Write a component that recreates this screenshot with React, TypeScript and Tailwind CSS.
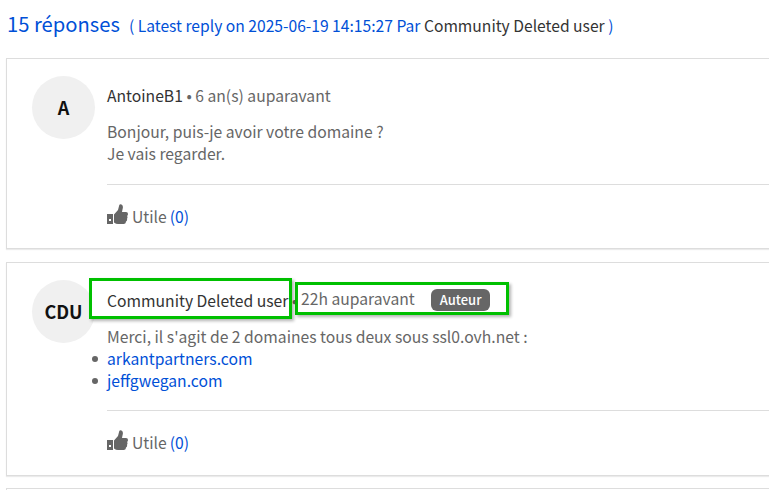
const font = "font-['Noto_Sans_CJK_JP','Liberation_Sans',sans-serif]";

function ThumbIcon() {
  return (
    <svg viewBox="0 0 21 20" className="mr-[4px] h-[20px] w-[21px] shrink-0 -translate-y-[3px] fill-[#666666]">
      <path d="M0 10h6v10H0z M2 15v2h2v-2z" fillRule="evenodd" />
      <path d="M7 10.5 11 6l1.3-5Q12.8-.2 14.500.5 16.600 1.600 15.600 5L15 8h4q2 0 2 2 0 1.500-1 2 1 1 0 3 .5 1.500-1 2.500 0 2-2 2.500h-6q-2 0-4-1.500z" />
    </svg>
  );
}

function Helpful() {
  return (
    <div className="flex h-[22px] items-center text-[15.7px] leading-[22px] text-[#666666]">
      <ThumbIcon />
      <span>Utile</span>
      <span className="ml-[3px] text-[#0050d7]">(0)</span>
    </div>
  );
}

function LinkItem({ label }: { label: string }) {
  return (
    <li className="-ml-[15px] flex items-center">
      <span className="mr-[9px] h-[6px] w-[6px] rounded-full bg-[#666666]" />
      <span className="text-[#0050d7]">{label}</span>
    </li>
  );
}

export default function App() {
  return (
    <div className={`${font} h-[490px] w-[769px] overflow-hidden bg-white`}>
      <div className="flex h-[58px] items-start pl-[7px] pt-[10px]">
        <span className="text-[20.2px] leading-[28px] text-[#0050d7]">15 réponses</span>
        <span className="ml-[9px] mt-[4px] text-[15.65px] leading-[24px] text-[#0050d7]">
          ( Latest reply on 2025-06-19 14:15:27 Par <span className="text-[#333333]">Community Deleted user</span> )
        </span>
      </div>

      <div className="ml-[6px] flex h-[191px] w-[800px] border border-r-0 border-[#dddddd] pl-[25px] pt-[17px] shadow-[0_1px_1px_rgba(0,0,0,0.08)]">
        <div className="flex h-[63px] w-[63px] shrink-0 items-center justify-center rounded-full bg-[#f0f0f0] text-[18px] font-bold text-[#111111]">
          A
        </div>
        <div className="ml-[12px] flex-1">
          <div className="mt-[8px] text-[15.7px] leading-[24px] text-[#666666]">
            <span className="text-[#333333]">AntoineB1</span> • 6 an(s) auparavant
          </div>
          <div className="mt-[13px] text-[15.7px] leading-[22px] text-[#666666]">
            Bonjour, puis-je avoir votre domaine ?
            <br />
            Je vais regarder.
          </div>
          <div className="mb-[21px] mt-[19px] h-px bg-[#dddddd]" />
          <Helpful />
        </div>
      </div>

      <div className="ml-[6px] mt-[13px] flex h-[214px] w-[800px] border border-r-0 border-[#dddddd] pl-[25px] pt-[17px] shadow-[0_1px_1px_rgba(0,0,0,0.08)]">
        <div className="flex h-[63px] w-[63px] shrink-0 items-center justify-center rounded-full bg-[#f0f0f0] text-[18px] font-bold text-[#111111]">
          CDU
        </div>
        <div className="ml-[12px] flex-1">
          <div className="flex h-[40px] items-start whitespace-nowrap text-[15.7px] text-[#666666]">
            <span className="relative z-10 -ml-[18px] -mt-[2px] flex h-[41px] w-[203px] items-center border-[3px] border-[#00c000] bg-white pl-[15px] pt-[5px] text-[#333333] shadow-[2px_2px_3px_rgba(0,0,0,0.3)]">
              Community Deleted user
            </span>
            <span className="mt-[9px] w-[3px] text-center">•</span>
            <span className="mt-[2px] flex h-[33px] w-[214px] items-center border-[3px] border-[#00c000] bg-white pl-[3px] shadow-[2px_2px_3px_rgba(0,0,0,0.3)]">
              <span>22h auparavant</span>
              <span className="ml-[16px] mt-[3px] rounded-[6px] bg-[#666666] px-[9px] text-[13px] font-medium leading-[22px] text-white">
                Auteur
              </span>
            </span>
          </div>
          <div className="mt-[6px] text-[15.7px] leading-[22px] text-[#666666]">
            Merci, il s'agit de 2 domaines tous deux sous ssl0.ovh.net :
          </div>
          <ul className="text-[15.7px] leading-[22px]">
            <LinkItem label="arkantpartners.com" />
            <LinkItem label="jeffgwegan.com" />
          </ul>
          <div className="mb-[21px] mt-[18px] h-px bg-[#dddddd]" />
          <Helpful />
        </div>
      </div>

      <div className="ml-[6px] mt-[12px] h-[20px] w-[800px] border border-r-0 border-[#dddddd]" />
    </div>
  );
}
